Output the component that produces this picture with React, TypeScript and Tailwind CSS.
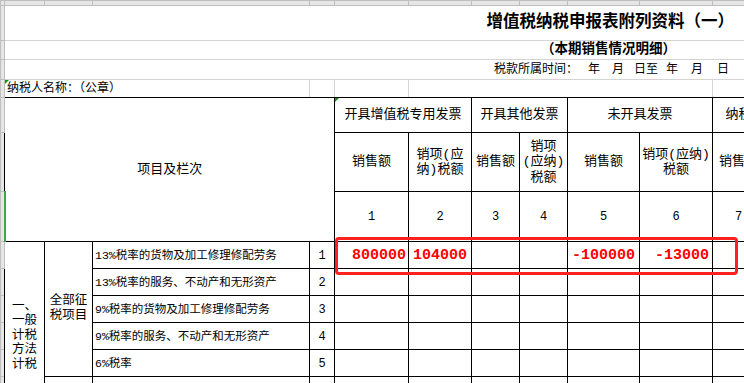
import React from 'react';

// 增值税纳税申报表附列资料（一） — spreadsheet view
const strip = 'bg-[#e6e6e6] border border-[#bfbfbf] p-0';
const grid = 'border border-[#d4d4d4] p-0';
const cell = 'border border-black p-0 text-center';

const rows = [
  '13%税率的货物及加工修理修配劳务',
  '13%税率的服务、不动产和无形资产',
  '9%税率的货物及加工修理修配劳务',
  '9%税率的服务、不动产和无形资产',
  '6%税率',
];

const Corner = () => (
  <span className="absolute left-0 top-0 w-0 h-0 border-t-[4px] border-r-[4px] border-t-[#1e8a1e] border-r-transparent" />
);

const Red = ({ v }: { v: string }) => (
  <span className="font-['Liberation_Mono',monospace] font-bold text-[15px] text-[#ff0000]">{v}</span>
);

const App = () => {
  return (
    <div className="relative w-[744px] h-[383px] overflow-hidden bg-white text-black font-['Liberation_Mono','Noto_Sans_CJK_SC',monospace]">
      <table className="table-fixed border-collapse w-[816px]">
        <colgroup>
          <col className="w-[4px]" />
          <col className="w-[40px]" />
          <col className="w-[48px]" />
          <col className="w-[217px]" />
          <col className="w-[25px]" />
          <col className="w-[74px]" />
          <col className="w-[63px]" />
          <col className="w-[48px]" />
          <col className="w-[48px]" />
          <col className="w-[72px]" />
          <col className="w-[73px]" />
          <col className="w-[52px]" />
          <col className="w-[52px]" />
        </colgroup>
        <tbody>
          {/* column header strip */}
          <tr className="h-[5px]">
            {Array.from({ length: 13 }).map((_, i) => (
              <td key={i} className={strip} />
            ))}
          </tr>

          <tr className="h-[35px]">
            <td className={strip} />
            <td colSpan={12} className={`${grid} text-right pr-[82px] font-bold text-[16.5px] leading-[20px] whitespace-nowrap`}>
              增值税纳税申报表附列资料（一）
            </td>
          </tr>

          <tr className="h-[19px]">
            <td className={strip} />
            <td colSpan={12} className={`${grid} text-right pr-[140px] font-bold text-[13.5px] leading-[16px] whitespace-nowrap`}>
              （本期销售情况明细）
            </td>
          </tr>

          <tr className="h-[20px]">
            <td className={strip} />
            <td colSpan={12} className={`${grid} text-right pr-[87px] text-[12px] leading-[16px] whitespace-nowrap`}>
              <span>税款所属时间：</span>
              <span className="ml-[10px]">年</span>
              <span className="ml-[12px]">月</span>
              <span className="ml-[10px]">日至</span>
              <span className="ml-[8px]">年</span>
              <span className="ml-[13px]">月</span>
              <span className="ml-[14px]">日</span>
            </td>
          </tr>

          <tr className="h-[18px]">
            <td className={strip} />
            <td colSpan={3} className={`${grid} border-b-black relative text-left pl-[2px] text-[12px] leading-[16px] whitespace-nowrap`}>
              <Corner />
              纳税人名称：（公章）
            </td>
            <td className={`${grid} border-b-black`} />
            <td className={`${grid} border-b-black`} />
            <td colSpan={5} className={`${grid} border-b-black`} />
            <td className={`${grid} border-b-black`} />
            <td className={`${grid} border-b-black`} />
          </tr>

          {/* header */}
          <tr className="h-[35px] text-[13px] leading-[15.5px] whitespace-nowrap">
            <td className={strip} />
            <td colSpan={4} rowSpan={3} className={cell}>项目及栏次</td>
            <td colSpan={2} className={`${cell} relative`}>
              <Corner />
              开具增值税专用发票
            </td>
            <td colSpan={2} className={cell}>开具其他发票</td>
            <td colSpan={2} className={cell}>未开具发票</td>
            <td colSpan={2} className={cell}>纳税检查调整</td>
          </tr>

          <tr className="h-[59px] text-[13px] leading-[15.5px] whitespace-nowrap">
            <td className={strip} />
            <td className={cell}>销售额</td>
            <td className={cell}>销项(应<br />纳)税额</td>
            <td className={cell}>销售额</td>
            <td className={cell}>销项<br />(应纳)<br />税额</td>
            <td className={cell}>销售额</td>
            <td className={cell}>销项(应纳)<br />税额</td>
            <td className={cell}>销售额</td>
            <td className={cell}>销项(应纳)<br />税额</td>
          </tr>

          <tr className="h-[50px] text-[12px]">
            <td className={`${strip} border-r-2 border-r-[#3cab46]`} />
            {[1, 2, 3, 4, 5, 6, 7, 8].map((n) => (
              <td key={n} className={cell}>{n}</td>
            ))}
          </tr>

          {/* body */}
          {rows.map((label, i) => (
            <tr key={label} className="h-[27px]">
              <td className={strip} />
              {i === 0 && (
                <>
                  <td rowSpan={7} className={`${cell} text-[12.5px] leading-[14.5px]`}>
                    一、<br />一般<br />计税<br />方法<br />计税
                  </td>
                  <td rowSpan={5} className={`${cell} text-[12.5px] leading-[15.5px]`}>
                    全部征<br />税项目
                  </td>
                </>
              )}
              <td className={`${cell} text-left pl-[2px] pt-[2px] text-[11.5px] whitespace-nowrap`}>{label}</td>
              <td className={`${cell} text-[12px] pt-[2px]`}>{i + 1}</td>
              {i === 0 ? (
                <>
                  <td className={`${cell} text-right pr-[2px]`}><Red v="800000" /></td>
                  <td className={`${cell} text-right pr-[4px]`}><Red v="104000" /></td>
                  <td className={cell} />
                  <td className={cell} />
                  <td className={`${cell} text-right pr-[4px]`}><Red v="-100000" /></td>
                  <td className={`${cell} text-right pr-[3px]`}><Red v="-13000" /></td>
                  <td className={cell} />
                  <td className={cell} />
                </>
              ) : (
                Array.from({ length: 8 }).map((_, k) => <td key={k} className={cell} />)
              )}
            </tr>
          ))}

          {[0, 1].map((r) => (
            <tr key={r} className="h-[27px]">
              <td className={strip} />
              {Array.from({ length: 11 }).map((_, k) => (
                <td key={k} className={cell} />
              ))}
            </tr>
          ))}
        </tbody>
      </table>

      {/* red highlight around row 1 */}
      <div className="absolute left-[335px] top-[237px] w-[403px] h-[38px] border-[3px] border-[#ff2020] rounded-[4px] pointer-events-none" />
    </div>
  );
};

export default App;
